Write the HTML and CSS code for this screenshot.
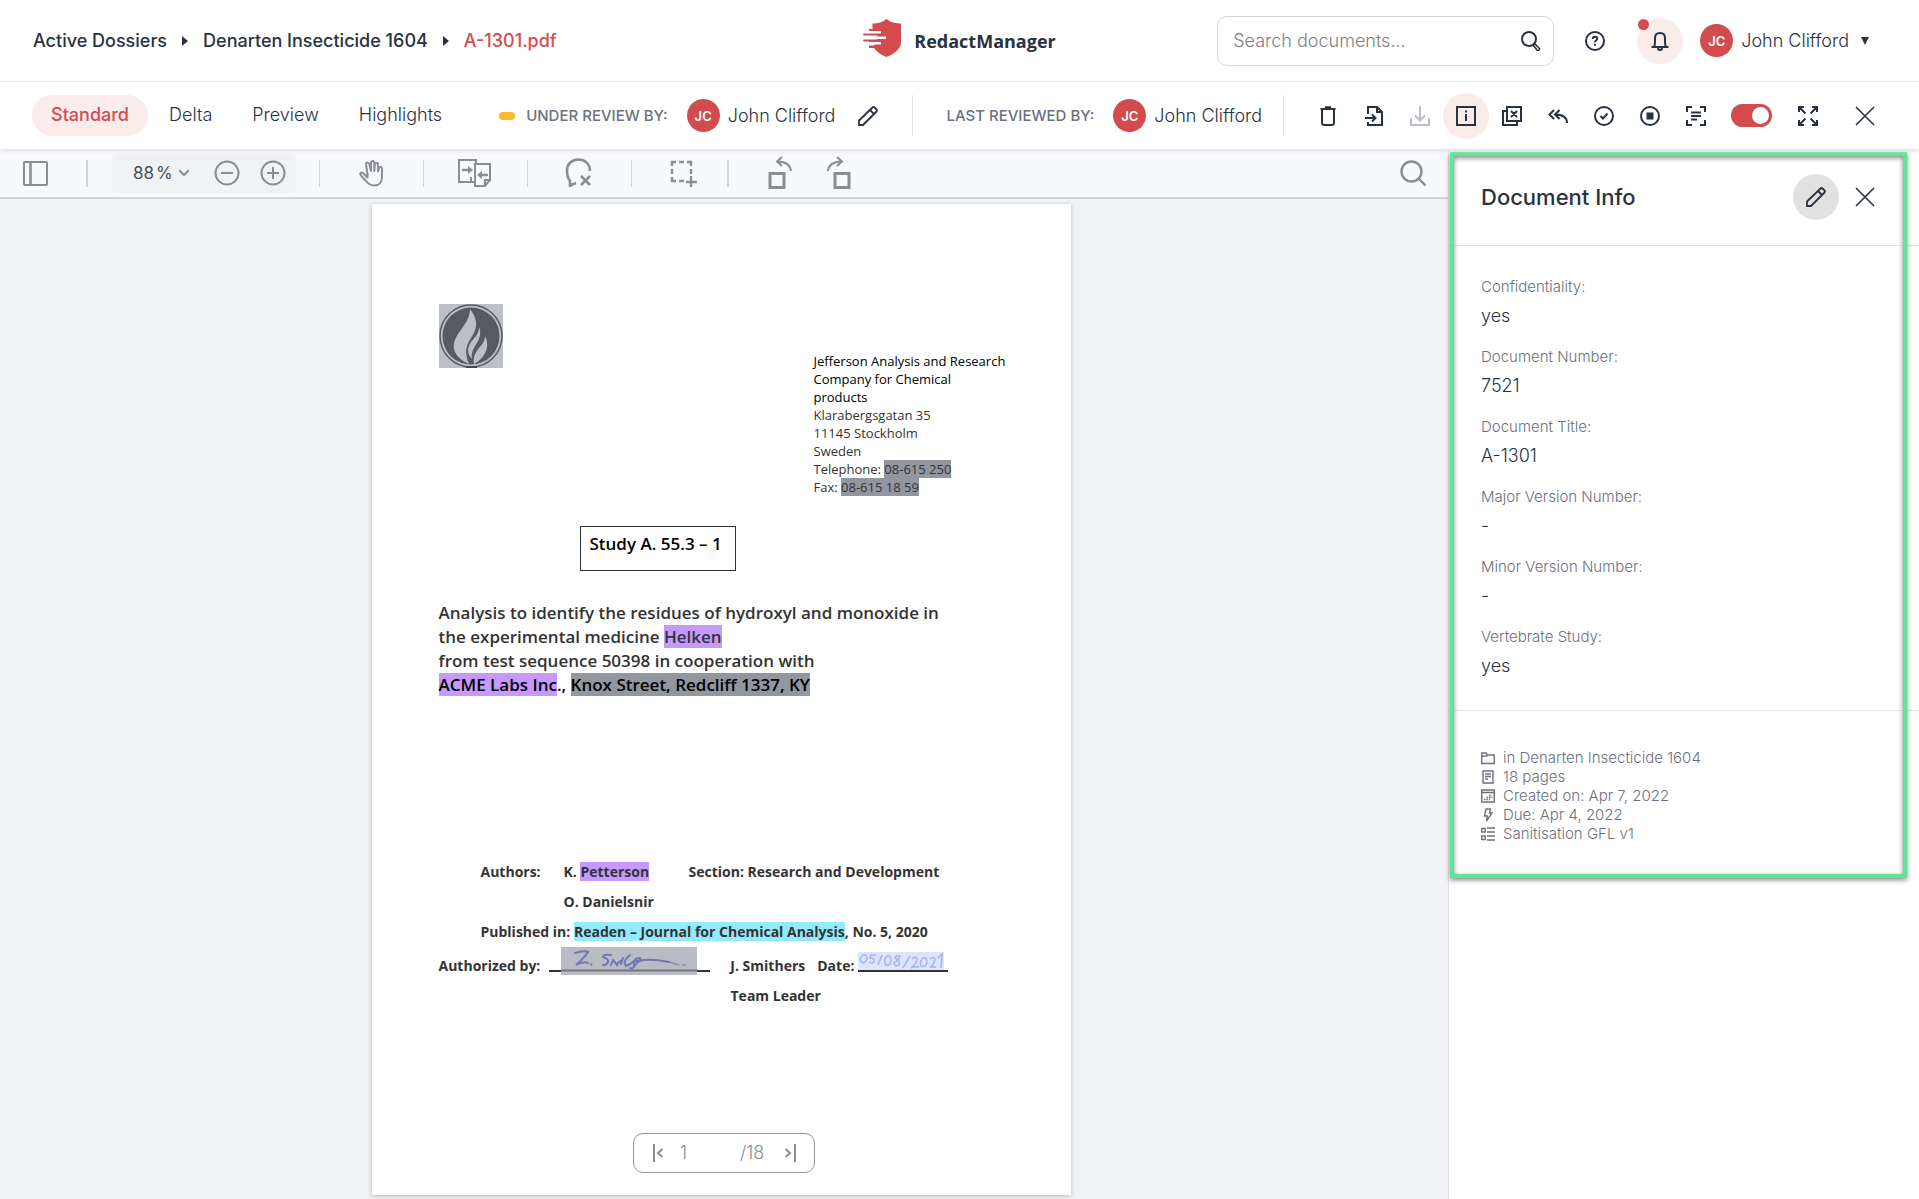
FILE: index.html
```html
<!DOCTYPE html>
<html lang="en">
<head>
<meta charset="utf-8">
<title>A-1301.pdf - RedactManager</title>
<link rel="stylesheet" href="styles.css">
</head>
<body>
<div class="app">
  <header class="topbar">
    <nav class="crumbs" aria-label="Breadcrumb">
      <a href="#">Active Dossiers</a>
      <svg width="6" height="10" viewBox="0 0 6 10"><path d="M0 0l6 5-6 5z" fill="currentColor"/></svg>
      <a href="#">Denarten Insecticide 1604</a>
      <svg width="6" height="10" viewBox="0 0 6 10"><path d="M0 0l6 5-6 5z" fill="currentColor"/></svg>
      <a href="#" class="current">A-1301.pdf</a>
    </nav>
    <a href="#" class="brand">
      <svg width="38" height="38" viewBox="0 0 38 38"><path fill="#d44b4e" d="M23.500 0C27 3 32 4.500 38 4.500V23C38 30 31 35 23.500 38C18 36 14 33 11 29H6V26.500H11L12 24.500H6V22.500H1Q0 22.500 0 21.500T1 20.500H14V16.500H1Q0 16.500 0 15.500T1 14.500H6V10H9.500V4.500C15 4.500 20 3 23.500 0Z"/><path stroke="#fff" stroke-width="2.400" d="M5 13.200h13M0 18.700h23M5 24.200h13"/></svg>
      <span>RedactManager</span>
    </a>
    <div class="account">
      <label class="search">
        <input type="search" placeholder="Search documents..." aria-label="Search documents">
        <svg width="20" height="20" viewBox="0 0 20 20" fill="none" stroke="currentColor" stroke-width="2"><circle cx="8" cy="8" r="7"/><path d="M13 12l5 5q1 1 0 2t-2 0l-4-5" stroke-width="1.600"/></svg>
      </label>
      <button class="round help" aria-label="Help"><svg width="20" height="20" viewBox="0 0 20 20" fill="none" stroke="currentColor" stroke-width="2"><circle cx="10" cy="10" r="9"/><path d="M7.800 8q0-2.200 2.200-2.200t2.200 2q0 1-1.200 1.700t-1 1.900M10 12.700v2"/></svg></button>
      <button class="round tinted bell" aria-label="Notifications"><svg width="20" height="20" viewBox="0 0 20 20" fill="none" stroke="currentColor" stroke-width="2"><path d="M1.500 16h17M4 16q1-2 1-5V7q0-5 5-5t5 5v4q0 3 1 5M8 17q0 2 2 2t2-2"/></svg><i class="dot"></i></button>
      <button class="user"><span class="avatar">JC</span><span>John Clifford</span><svg width="8" height="8" viewBox="0 0 8 8"><path d="M0 0h8L4 8z" fill="currentColor"/></svg></button>
    </div>
  </header>

  <div class="filebar">
    <div class="tabs">
      <button class="tab active">Standard</button>
      <button class="tab">Delta</button>
      <button class="tab">Preview</button>
      <button class="tab">Highlights</button>
    </div>
    <div class="review">
      <i class="status"></i>
      <span class="caption">UNDER REVIEW BY:</span>
      <span class="avatar">JC</span><span class="person">John Clifford</span>
      <button class="plain" aria-label="Change reviewer"><svg width="20" height="20" viewBox="0 0 20 20" fill="none" stroke="currentColor" stroke-width="1.800"><path d="M1 19v-4.500L14.500 1.500q1-1 2 0l2 2q1 1 0 2L5 19zM12 4l4 4"/></svg></button>
    </div>
    <div class="review last">
      <span class="caption">LAST REVIEWED BY:</span>
      <span class="avatar">JC</span><span class="person">John Clifford</span>
    </div>
    <div class="actions">
      <button class="round" aria-label="Delete"><svg width="20" height="20" viewBox="0 0 20 20" fill="none" stroke="currentColor" stroke-width="2"><path d="M2.500 3h15M4 3v13.500Q4 19 6.500 19h7q2.500 0 2.500-2.500V3M7 1.200h6"/></svg></button>
      <button class="round" aria-label="Move file"><svg width="20" height="20" viewBox="0 0 20 20" fill="none" stroke="currentColor" stroke-width="2"><path d="M4 8V1h9l5 5v13H4v-3M13 1v5h5M1 12h10M8 8.500l3.500 3.500L8 15.500"/></svg></button>
      <button class="round" aria-label="Download" disabled><svg width="20" height="20" viewBox="0 0 20 20" fill="none" stroke="currentColor" stroke-width="2"><path d="M10 0v14M5 9.500l5 5 5-5M1 12v7h18v-7"/></svg></button>
      <button class="round tinted" aria-label="Document info"><svg width="20" height="20" viewBox="0 0 20 20" fill="none" stroke="currentColor" stroke-width="2"><path d="M1 1h18v18H1zM10 8v7M10 4.500v2"/></svg></button>
      <button class="round" aria-label="Exclude pages"><svg width="20" height="20" viewBox="0 0 20 20" fill="none" stroke="currentColor" stroke-width="2"><path d="M5 1h14v14H5zM5 5H1v14h14v-4M9 5l6 6M15 5l-6 6"/></svg></button>
      <button class="round" aria-label="Undo"><svg width="20" height="20" viewBox="0 0 20 20" fill="none" stroke="currentColor" stroke-width="2"><path d="M6 4L1.500 8.500 6 13M11.500 4L7 8.500l4.500 4.500M7 8.500q12 0 12 8.500"/></svg></button>
      <button class="round" aria-label="Approve"><svg width="20" height="20" viewBox="0 0 20 20" fill="none" stroke="currentColor" stroke-width="2"><circle cx="10" cy="10" r="9"/><path d="M6.500 10l2.500 2.500 4.500-5"/></svg></button>
      <button class="round" aria-label="Stop"><svg width="20" height="20" viewBox="0 0 20 20" fill="none" stroke="currentColor" stroke-width="2"><circle cx="10" cy="10" r="9"/><path d="M6.500 6.500h7v7h-7z" fill="currentColor" stroke="none"/></svg></button>
      <button class="round" aria-label="Text recognition"><svg width="20" height="20" viewBox="0 0 20 20" fill="none" stroke="currentColor" stroke-width="2"><path d="M1 6V1h5M14 1h5v5M19 14v5h-5M6 19H1v-5M5 6.500h10M5 10h10M5 13.500h6"/></svg></button>
      <label class="toggle"><input type="checkbox" checked aria-label="Automatic analysis"><i></i></label>
      <button class="round" aria-label="Full screen"><svg width="20" height="20" viewBox="0 0 20 20" fill="none" stroke="currentColor" stroke-width="2"><path d="M1 6V1h5M14 1h5v5M19 14v5h-5M6 19H1v-5M1 1l6.500 6.500M19 1l-6.500 6.500M19 19l-6.500-6.500M1 19l6.500-6.500"/></svg></button>
      <button class="round close" aria-label="Close file"><svg width="20" height="20" viewBox="0 0 20 20" stroke="currentColor" stroke-width="1.600"><path d="M1 1l18 18M19 1L1 19"/></svg></button>
    </div>
  </div>

  <main class="work">
    <section class="viewer">
      <div class="tools">
        <button class="tool first" aria-label="Panel"><svg width="26" height="26" viewBox="0 0 26 26" fill="none" stroke="currentColor" stroke-width="2"><rect x="2" y="2" width="23" height="23" rx="1"/><path d="M8.500 2v23" stroke-width="2.500"/></svg></button>
        <div class="zoom">
          <button class="level"><span>88</span><span>%</span><svg width="10" height="8" viewBox="0 0 10 8" fill="none" stroke="#868e96" stroke-width="2"><path d="M0 1l5 5 5-5"/></svg></button>
          <button class="step" aria-label="Zoom out"><svg width="26" height="26" viewBox="0 0 26 26" fill="none" stroke="currentColor" stroke-width="2"><circle cx="13" cy="13" r="11.500"/><path d="M7 13h12"/></svg></button>
          <button class="step" aria-label="Zoom in"><svg width="26" height="26" viewBox="0 0 26 26" fill="none" stroke="currentColor" stroke-width="2"><circle cx="13" cy="13" r="11.500"/><path d="M7 13h12M13 7v12"/></svg></button>
        </div>
        <button class="tool lined" aria-label="Pan"><svg width="26" height="28" viewBox="0 0 26 28" fill="none" stroke="currentColor" stroke-width="2" stroke-linecap="round" stroke-linejoin="round"><path d="M9.500 15L8 5.500q0-2 1.500-2t2 2L13 12V4q.2-2 1.700-2t1.600 2v8l.5-6.500q.2-1.700 1.600-1.700t1.500 1.800L20 12.500 21 9q.5-1.500 1.800-1.300T24 9.500V18c0 5-3 8.500-7.500 8.500-4 0-6-1.500-8-4L2.500 16c-1-1.500.8-3 2.500-2l4.500 4.500V15"/></svg></button>
        <button class="tool lined" aria-label="Compare"><svg width="34" height="30" viewBox="0 0 34 30" fill="none" stroke="currentColor" stroke-width="2"><path d="M14 24H1V2h17v3M17 6h15v16l-5 6H17zM13 19v5h4M27 28v-6h6"/><path d="M4 12h8M30 17h-8" stroke-width="2.400"/><path d="M10 8l5 4-5 4zM24 13l-5 4 5 4z" fill="currentColor" stroke="none"/></svg></button>
        <button class="tool lined" aria-label="Delete redaction"><svg width="30" height="30" viewBox="0 0 30 30" fill="none" stroke="currentColor" stroke-width="2.600"><path d="M6 29V23C3.500 20 3 16 3 12.500 3 6 8 1.500 14.500 1.500S26 6 26 13M5 28l7-3M17 18l9 9M26 18L17 27"/></svg></button>
        <button class="tool lined" aria-label="Add area"><svg width="28" height="28" viewBox="0 0 28 28" fill="none" stroke="currentColor" stroke-width="2.400"><path d="M3 7V3h4M10 3h5M18 3h4v4M22 10v5M3 10v5M3 18v4h4M10 22h5M22 17v11M17 23h11"/></svg></button>
        <button class="rotate lined" aria-label="Rotate left"><svg width="26" height="34" viewBox="0 0 26 34" fill="none" stroke="currentColor" stroke-width="3"><path d="M3 17.500h14v14H3z"/><path d="M24 15q-1-9-13-9.500M15 1l-5 4.500L15 10" stroke-width="2"/></svg></button>
        <button class="rotate" aria-label="Rotate right"><svg width="26" height="34" viewBox="0 0 26 34" fill="none" stroke="currentColor" stroke-width="3"><path d="M9 17.500h14v14H9z"/><path d="M2 15q1-9 13-9.500M11 1l5 4.500L11 10" stroke-width="2"/></svg></button>
        <button class="tool find" aria-label="Find"><svg width="26" height="26" viewBox="0 0 26 26" fill="none" stroke="currentColor" stroke-width="2.400"><circle cx="11.500" cy="11.500" r="10"/><path d="M18.500 18.500l7 7"/></svg></button>
      </div>
      <div class="canvas">
        <article class="page">
          <svg class="seal" width="64" height="64" viewBox="0 0 64 64"><path d="M0 0h64v64H0z" fill="#bcc0c5"/><circle cx="32" cy="32" r="31" fill="none" stroke="#575a5f" stroke-width="1.500"/><circle cx="32" cy="32" r="28.500" fill="#575a5f"/><path d="M27 62h11v2H27z" fill="#44474c"/><path fill="#bcc0c5" d="M31 5C40 17 38 25 32 34 26 43 26 50 30 60 20 56 13 48 15 39 18 27 31 19 31 5ZM40 23C43 30 40 36 36 42 33 47 32 51 33 55 28 50 28 44 32 38 36 33 40 30 40 23ZM46 32C52 43 45 55 35 60 34 53 36 49 40 44 44 40 46 36 46 32Z"/></svg>
          <address class="sender">
            <span class="ink">Jefferson Analysis and Research<br>Company for Chemical<br>products</span><br>
            Klarabergsgatan 35<br>11145 Stockholm<br>Sweden<br>
            Telephone: <mark class="gray">08-615 250</mark><br>
            Fax: <mark class="gray">08-615 18 59</mark>
          </address>
          <div class="study">Study A. 55.3 – 1</div>
          <h1 class="subject">Analysis to identify the residues of hydroxyl and monoxide in<br>the experimental medicine <mark class="violet">Helken</mark><br>from test sequence 50398 in cooperation with<br><span class="ink"><mark class="violet">ACME Labs Inc</mark>., <mark class="gray">Knox Street, Redcliff 1337, KY</mark></span></h1>
          <div class="credits">
            <div class="row indent"><span class="c1">Authors:</span><span class="c2">K. <mark class="violet">Petterson</mark></span><span>Section: Research and Development</span></div>
            <div class="row indent"><span class="c1"></span><span>O. Danielsnir</span></div>
            <div class="row indent"><span>Published in: <mark class="cyan">Readen – Journal for Chemical Analysis</mark>, No. 5, 2020</span></div>
            <div class="row sign"><span>Authorized by:</span>
              <span class="line wide"><svg width="136" height="28" viewBox="0 0 136 28" fill="none" stroke="#7377b8" stroke-width="2" stroke-linecap="round"><path d="M0 0h136v28H0z" fill="#b9bcc2" stroke="none"/><path d="M0 23.500h136" stroke="#70747f"/><path d="M14 6q9-3 13-1-3 5-12 13 7-4 12-2M30 17.500h.5M50 8q-8-1-8 2 6 2 5 5-2 4-5 3M50 18l2-5q2 2 4 5 1-3 4-4M60 17l2-6M69 8q-8 6-4 11 5-2 8-5 8 0 6-3-6-1-6 7 0 4-4 3M73 20q3-6 9-7 12-1 26 2"/><path d="M108 15l10 3M121 18h4" stroke-width="1"/></svg></span>
              <span class="c3">J. Smithers</span><span class="c4">Date:</span>
              <span class="line"><svg width="86" height="18" viewBox="0 0 86 18" fill="none" stroke="#a9b2ee" stroke-width="1.500"><path d="M0 0h86v18H0z" fill="#dbe5fd" stroke="none"/><path d="M5 3q-4 3-2 7 4 2 6-3 0-5-4-4M18 3h-5l-1 3q5 0 4 4-2 2-5 0M20 13l4-10M29 4q-4 4-1 9 4 1 5-4 0-6-4-5M42 4q-5-1-5 2 6 3 4 7-5 2-5-2 5-3 6-7M45 16l7-12M54 7q3-3 5-1 1 4-6 10 4-2 8-1M65 6q-4 4-2 8 5 2 6-4 0-5-4-4M72 7q3-3 5 0 0 3-4 8h5M80 6l4-4-1 14"/></svg></span>
            </div>
            <div class="row lead">Team Leader</div>
          </div>
        </article>
        <div class="pager">
          <button class="plain" aria-label="First page"><svg width="12" height="18" viewBox="0 0 12 18" fill="none" stroke="currentColor" stroke-width="2"><path d="M2 0v18M10.500 5L6 9l4.500 4"/></svg></button>
          <input value="1" aria-label="Page">
          <span>/18</span>
          <button class="plain" aria-label="Last page"><svg width="12" height="18" viewBox="0 0 12 18" fill="none" stroke="currentColor" stroke-width="2"><path d="M11 0v18M1.500 5L6 9l-4.500 4"/></svg></button>
        </div>
      </div>
    </section>

    <aside class="side">
      <div class="info">
        <header class="head">
          <h2>Document Info</h2>
          <button class="round edit" aria-label="Edit"><svg width="20" height="20" viewBox="0 0 20 20" fill="none" stroke="currentColor" stroke-width="1.800"><path d="M1 19v-4.500L14.500 1.500q1-1 2 0l2 2q1 1 0 2L5 19zM12 4l4 4"/></svg></button>
          <button class="round" aria-label="Close info"><svg width="20" height="20" viewBox="0 0 20 20" stroke="currentColor" stroke-width="1.600"><path d="M1 1l18 18M19 1L1 19"/></svg></button>
        </header>
        <dl class="fields">
          <div><dt>Confidentiality:</dt><dd>yes</dd></div>
          <div><dt>Document Number:</dt><dd>7521</dd></div>
          <div><dt>Document Title:</dt><dd>A-1301</dd></div>
          <div><dt>Major Version Number:</dt><dd>-</dd></div>
          <div><dt>Minor Version Number:</dt><dd>-</dd></div>
          <div><dt>Vertebrate Study:</dt><dd>yes</dd></div>
        </dl>
        <ul class="meta">
          <li><svg width="14" height="14" viewBox="0 0 14 14" fill="none" stroke="currentColor" stroke-width="1.400"><path d="M.7 12.500V2h4.500l1 2h7v8.500zM.7 5h5l1-1"/></svg>in Denarten Insecticide 1604</li>
          <li><svg width="14" height="14" viewBox="0 0 14 14" fill="none" stroke="currentColor" stroke-width="1.400"><path d="M2 1h10v12H2zM4 4h6M4 6.500h6M4 9h3"/></svg>18 pages</li>
          <li><svg width="14" height="14" viewBox="0 0 14 14" fill="none" stroke="currentColor" stroke-width="1.400"><path d="M.7 1h12.600v12H.7zM1 3.500h12"/><path d="M8 6.500h3M5.500 8.500h6M3 10.500h6" stroke-dasharray="1.500 1"/></svg>Created on: Apr 7, 2022</li>
          <li><svg width="14" height="14" viewBox="0 0 14 14" fill="none" stroke="currentColor" stroke-width="1.400"><path d="M5 1h4.500L8.500 5H11l-5.500 8 .8-5H3.500z"/></svg>Due: Apr 4, 2022</li>
          <li><svg width="14" height="14" viewBox="0 0 14 14" fill="none" stroke="currentColor" stroke-width="1.400"><path d="M.7 1.500h3.500V5H.7zM.7 9h3.500v3.500H.7zM6 1h8M6 5h8M6 9h8M6 13h8"/></svg>Sanitisation GFL v1</li>
        </ul>
        <div class="frame"></div>
      </div>
    </aside>
  </main>
</div>
</body>
</html>
```

FILE: styles.css
```css
* { box-sizing: border-box; }
body { margin: 0; font: 300 18px/20px Inter, sans-serif; color: #283241; background: #fff; }
a { color: inherit; text-decoration: none; }
svg { display: block; flex: none; }
button { display: flex; align-items: center; justify-content: center; margin: 0; padding: 0; border: 0; background: none; color: inherit; font: inherit; }
input { min-width: 0; padding: 0; border: 0; outline: 0; background: none; color: inherit; font: inherit; }
input::placeholder { color: #7c808a; opacity: 1; }

.app { display: flex; flex-direction: column; height: 100vh; overflow: hidden; }

.topbar { display: grid; grid-template-columns: 1fr auto 1fr; align-items: center; flex: none; height: 82px; padding: 0 33px; border-bottom: 1px solid #e2e4e9; }
.crumbs { display: flex; align-items: center; gap: 15px; font-weight: 500; }
.current { color: #d44b4e; }
.brand { display: flex; align-items: center; gap: 13px; font: 700 18px/24px "Open Sans", sans-serif; }
.brand svg { margin-bottom: 6px; }
.account { display: flex; align-items: center; justify-content: flex-end; padding-right: 17px; }
.search { display: flex; align-items: center; width: 337px; height: 50px; margin-right: 18px; padding: 0 12px 0 15px; border: 1px solid #d3d5dc; border-radius: 10px; }
.search input { flex: 1; }
.round { position: relative; flex: none; width: 46px; height: 46px; border-radius: 50%; }
.round:disabled { color: #bcbec3; }
.tinted { background: #fbecec; }
.help { margin-right: 19px; }
.bell { margin-right: 17px; }
.dot { position: absolute; left: 1px; top: 1px; width: 11px; height: 11px; border-radius: 50%; background: #d44b4e; }
.avatar { display: flex; align-items: center; justify-content: center; flex: none; width: 33px; height: 33px; border-radius: 50%; background: #d44b4e; color: #fff; font-size: 13px; font-weight: 600; }
.user { gap: 8px; }
.user svg { margin-left: 4px; }

.filebar { position: relative; z-index: 1; display: flex; align-items: center; flex: none; height: 67px; padding: 0 31px 0 32px; background: #fff; box-shadow: 0 2px 4px #dcdfe5; }
.tabs { display: flex; gap: 2px; }
.tab { height: 41px; padding: 0 19px 2px; border-radius: 21px; }
.active { background: #fbecec; color: #d44b4e; font-weight: 500; }
.review { display: flex; align-items: center; height: 41px; margin-left: 38px; }
.status { width: 16px; height: 8px; margin-right: 11px; border-radius: 4px; background: #fdb92b; }
.caption { margin-right: 19px; font-size: 15px; font-weight: 500; color: #6c717e; }
.person { margin-left: 8px; }
.review .plain { margin-left: 23px; }
.last { margin-left: 34px; padding: 0 21px 0 33px; border: solid #e2e4e9; border-width: 0 1px; }
.actions { display: flex; align-items: center; margin-left: auto; }
.toggle { position: relative; width: 41px; height: 23px; margin: 0 13px 0 12px; }
.toggle input { position: absolute; inset: 0; opacity: 0; }
.toggle i { display: block; height: 23px; padding: 3px; border-radius: 12px; background: #d44b4e; }
.toggle i::after { content: ""; display: block; width: 17px; height: 17px; margin-left: auto; border-radius: 50%; background: #fff; }
.close { margin-left: 11px; }

.work { display: grid; grid-template-columns: 1fr 471px; flex: 1; min-height: 0; }
.viewer { display: flex; flex-direction: column; min-width: 0; min-height: 0; background: #f1f2f4; }
.tools { display: flex; align-items: center; flex: none; height: 50px; border-bottom: 2px solid #cfd3db; background: #f8f9fb; color: #868e96; }
.tool { width: 104px; height: 27px; }
.first { width: 88px; padding-right: 17px; border-right: 2px solid #cfd3db; }
.zoom { display: flex; align-items: center; height: 39px; margin: 0 23px 0 24px; border-radius: 5px; background: #f1f2f4; }
.level { gap: 2px; padding: 0 15px 0 21px; font-size: 17px; font-weight: 400; color: #495057; }
.level svg { margin-left: 4px; }
.step { width: 46px; }
.lined { border-left: 1px solid #cfd3db; }
.rotate { width: 60px; height: 27px; }
.rotate.lined { width: 82px; margin-left: -8px; padding-left: 22px; border-left-width: 2px; }
.find { width: 70px; margin-left: auto; padding-right: 1px; }

.canvas { position: relative; flex: 1; min-height: 0; padding: 5px 6px 0 0; }
.page { width: 699px; height: 991px; margin: 0 auto; padding: 100px 60px 0 67px; background: #fff; box-shadow: 0 1px 4px #b4b7bd; color: #333; font: 700 14px/30px "Open Sans", sans-serif; }
.ink { color: #000; }
mark { color: inherit; }
.gray { background: #92969f; }
.violet { background: #c699ff; }
.cyan { background: #93ebff; }
.sender { width: 210px; margin: -16px 0 0 375px; font: 13px/18px "Open Sans", sans-serif; }
.study { width: 156px; height: 45px; margin: 30px 0 0 141px; padding: 5px 9px; border: 1px solid #333; color: #000; font-size: 17px; line-height: 24px; font-weight: 600; white-space: nowrap; }
.subject { margin: 30px 0 0; font-size: 17px; line-height: 24px; font-weight: 600; white-space: nowrap; }
.credits { margin-top: 160px; }
.row { display: flex; }
.indent { padding-left: 42px; }
.c1 { width: 83px; }
.c2 { width: 125px; }
.sign { padding-top: 4px; }
.line { display: flex; height: 25px; width: 90px; margin: -4px 0 0 4px; padding-top: 5px; border-bottom: 2px solid #333; }
.wide { width: 161px; margin-left: 9px; padding: 0 0 0 12px; }
.c3 { margin-left: 20px; }
.c4 { margin-left: 12px; }
.lead { padding-left: 292px; }

.pager { position: absolute; left: 50%; bottom: 26px; display: flex; align-items: center; width: 182px; height: 40px; margin-left: -91px; padding: 0 18px; border: 1px solid #9498a3; border-radius: 10px; background: #fff; color: #868e96; }
.pager input { width: 60px; margin-left: 16px; }
.pager .plain:last-child { margin-left: auto; }

.side { border-left: 1px solid #dde0e6; background: #fff; }
.info { position: relative; }
.head { display: flex; align-items: center; height: 97px; padding: 0 31px 0 32px; border-bottom: 1px solid #e2e4e9; }
h2 { flex: 1; margin: 0; font-size: 22px; line-height: 26px; font-weight: 500; }
.edit { margin-right: 3px; background: #e1e1e1; }
.fields { display: flex; flex-direction: column; gap: 20px; margin: 0; padding: 31px 32px 33px; border-bottom: 1px solid #e2e4e9; }
dt { margin-bottom: 8px; font-size: 15px; color: #6c717e; }
dd { margin: 0; line-height: 22px; }
.meta { margin: 0; padding: 37px 32px 35px; list-style: none; font-size: 15px; line-height: 19px; color: #6c717e; }
.meta li { display: flex; align-items: center; gap: 8px; }
.frame { position: absolute; inset: 3px 12px 0 1px; border: 4px solid #5ee597; box-shadow: 0 2px 5px #888, inset 0 2px 5px #888; pointer-events: none; }
```
